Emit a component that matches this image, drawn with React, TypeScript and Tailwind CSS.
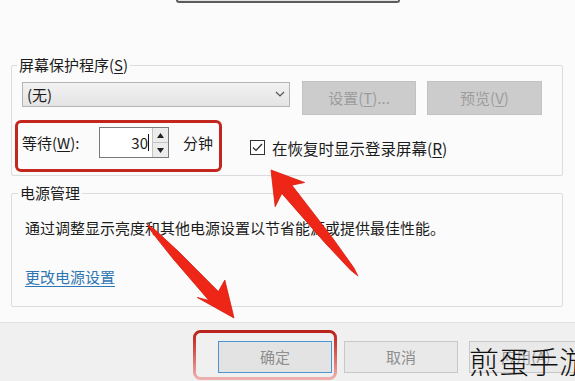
import React from "react";

type Pt = [number, number];

function arrowPath(tip: Pt, tail: Pt, list: [number, number][]): string {
  const dx = tip[0] - tail[0];
  const dy = tip[1] - tail[1];
  const len = Math.hypot(dx, dy);
  const ux = dx / len;
  const uy = dy / len;
  const px = -uy;
  const py = ux;
  return list
    .map(([a, p]) => {
      const x = tip[0] - a * ux + p * px;
      const y = tip[1] - a * uy + p * py;
      return `${x.toFixed(1)},${y.toFixed(1)}`;
    })
    .join(" ");
}

const arrow1 = arrowPath([271, 170], [358, 276], [
  [0, 0],
  [31, 18],
  [25, 6.5],
  [90, 4.5],
  [128, 2],
  [137, 0],
  [128, -2],
  [90, -4.5],
  [25, -6.5],
  [31, -20],
]);

const arrow2 = arrowPath([234, 318], [147, 224], [
  [0, 0],
  [40, 13],
  [30, 6.5],
  [85, 4.5],
  [118, 2],
  [128, 0],
  [118, -2],
  [85, -4.5],
  [30, -6.5],
  [34, -19],
]);

export default function App() {
  return (
    <div className="relative w-[575px] h-[381px] overflow-hidden bg-[#fbfbfb] text-[15px] text-[#1b1b1b] font-['Noto_Sans_CJK_SC','Noto_Sans',sans-serif]">
      {/* bottom of monitor preview */}
      <div className="ml-[176px] w-[224px] h-[3px] border-x-2 border-b-2 border-[#5c5c5c] rounded-b-[4px] bg-[#e2e2e2]" />

      {/* screen saver group */}
      <fieldset className="mt-[53px] ml-[11px] w-[552px] border border-[#dcdcdc] rounded-[2px] pb-[17px]">
        <legend className="ml-[5px] px-[2px] leading-[18px]">
          屏幕保护程序(<span className="underline underline-offset-2">S</span>)
        </legend>
        <div className="mt-[7px] pl-[10px] flex items-start">
          <div className="mt-[1px] w-[268px] h-[25px] border border-[#b4b4b4] bg-gradient-to-b from-[#f2f2f2] to-[#e4e4e4] flex items-center justify-between pl-[4px] pr-[4px]">
            <span className="leading-[20px]">(无)</span>
            <svg width="10" height="7" viewBox="0 0 10 7">
              <polyline points="1,1 5,5 9,1" fill="none" stroke="#555" strokeWidth="1.2" />
            </svg>
          </div>
          <div className="ml-[12px] w-[114px] h-[34px] bg-[#cccccc] border border-[#c2c2c2] flex items-center justify-center text-[#9c9c9c] leading-[20px]">
            设置(<span className="underline underline-offset-2">T</span>)...
          </div>
          <div className="ml-[11px] w-[115px] h-[34px] bg-[#cccccc] border border-[#c2c2c2] flex items-center justify-center text-[#9c9c9c] leading-[20px]">
            预览(<span className="underline underline-offset-2">V</span>)
          </div>
        </div>
        <div className="mt-[12px] pl-[10px] flex items-start">
          <span className="w-[77px] h-[31px] leading-[31px] shrink-0">
            等待(<span className="underline underline-offset-2">W</span>):
          </span>
          <div className="w-[70px] h-[31px] border border-[#7a7a7a] bg-white flex shrink-0">
            <div className="flex-1 flex items-center justify-end pr-[3px]">
              <span className="leading-[20px]">30</span>
              <span className="w-px h-[17px] bg-[#111]" />
            </div>
            <div className="w-[16px] border-l border-[#c4c4c4] flex flex-col">
              <div className="flex-1 bg-[#ececec] border-b border-[#c4c4c4] flex items-center justify-center">
                <svg width="7" height="5" viewBox="0 0 7 5">
                  <polygon points="0,5 3.5,0 7,5" fill="#222" />
                </svg>
              </div>
              <div className="flex-1 bg-[#ececec] flex items-center justify-center">
                <svg width="7" height="5" viewBox="0 0 7 5">
                  <polygon points="0,0 3.5,5 7,0" fill="#222" />
                </svg>
              </div>
            </div>
          </div>
          <span className="ml-[14px] w-[30px] h-[31px] leading-[31px] shrink-0">分钟</span>
          <div className="ml-[37px] mt-[13px] h-[15px] flex items-center shrink-0">
            <div className="w-[15px] h-[15px] border border-[#333] bg-white flex items-center justify-center">
              <svg width="11" height="9" viewBox="0 0 11 9">
                <polyline points="1,4.5 4,7.5 10,1" fill="none" stroke="#222" strokeWidth="1.2" />
              </svg>
            </div>
            <span className="ml-[7px] leading-[20px] text-[15.5px]">
              在恢复时显示登录屏幕(<span className="underline underline-offset-2">R</span>)
            </span>
          </div>
        </div>
      </fieldset>

      {/* power group */}
      <fieldset className="mt-[8px] ml-[11px] w-[552px] border border-[#dcdcdc] rounded-[2px] pb-[19px]">
        <legend className="ml-[6px] px-[2px] leading-[18px]">电源管理</legend>
        <div className="mt-[16px] pl-[13px] leading-[20px]">
          通过调整显示亮度和其他电源设置以节省能源或提供最佳性能。
        </div>
        <div className="mt-[29px] pl-[13px] leading-[20px]">
          <span className="text-[#2f77b4] underline underline-offset-[3px] decoration-[#2f77b4]">更改电源设置</span>
        </div>
      </fieldset>

      {/* bottom button bar */}
      <div className="mt-[15px] h-[59px] bg-[#f0f0f0] border-t border-[#e3e3e3] pt-[18px] flex">
        <div className="ml-[218px] w-[114px] h-[32px] shrink-0 border border-[#4a94d4] bg-[#e3e3e3] flex items-center justify-center text-[#8e8e8e] leading-[20px]">
          确定
        </div>
        <div className="ml-[12px] w-[114px] h-[32px] shrink-0 border border-[#c8c8c8] bg-[#e9e9e9] flex items-center justify-center text-[#8e8e8e] leading-[20px]">
          取消
        </div>
        <div className="ml-[11px] w-[114px] h-[32px] shrink-0 border border-[#c8c8c8] bg-[#e9e9e9] flex items-center justify-center text-[#9a9a9a] leading-[20px]">
          应用(A)
        </div>
      </div>

      {/* annotation: red box around wait */}
      <div className="absolute left-[15px] top-[120px] w-[207px] h-[52px] border-[3px] border-[#c3261f] rounded-[6px]" />

      {/* annotations: arrows and box around OK */}
      <svg className="absolute left-0 top-0 pointer-events-none" width="575" height="381" viewBox="0 0 575 381">
        <defs>
          <linearGradient id="okbox" x1="0" y1="0" x2="0" y2="1">
            <stop offset="0" stopColor="#b8231c" />
            <stop offset="0.35" stopColor="#cf4a44" />
            <stop offset="1" stopColor="#eeb0ae" />
          </linearGradient>
        </defs>
        <rect x="194.5" y="331.5" width="141" height="47" rx="6" fill="none" stroke="url(#okbox)" strokeWidth="3" />
        <polygon points={arrow1} fill="#ee2617" stroke="#d61d10" strokeWidth="0.8" strokeLinejoin="round" />
        <polygon points={arrow2} fill="#ee2617" stroke="#d61d10" strokeWidth="0.8" strokeLinejoin="round" />
      </svg>

      {/* watermark */}
      <div className="absolute left-[469px] top-[340px] text-[30px] leading-[40px] font-light text-[#111] whitespace-nowrap">
        煎蛋手游
      </div>
    </div>
  );
}
